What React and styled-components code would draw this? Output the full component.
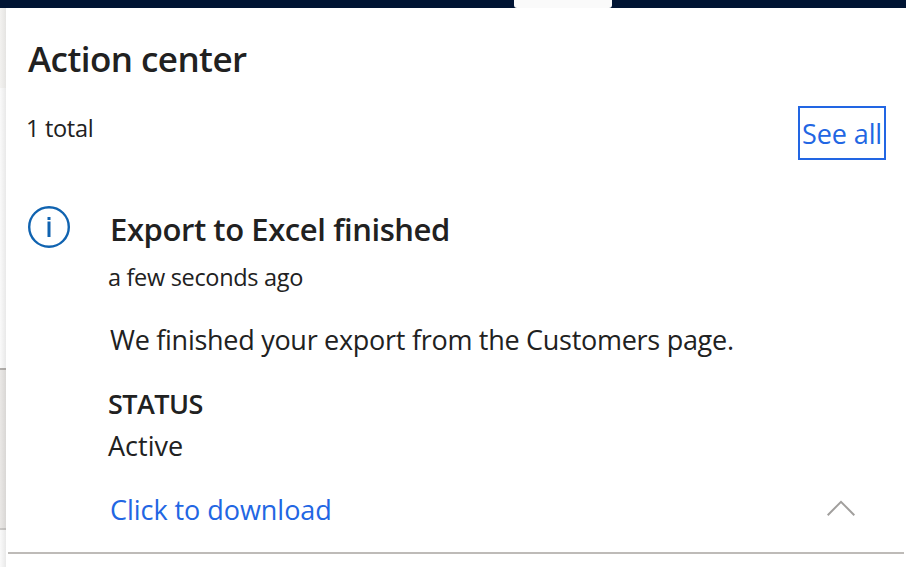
import React from "react";
import styled, { createGlobalStyle } from "styled-components";

const GlobalStyle = createGlobalStyle`
  * { box-sizing: border-box; }
  body {
    margin: 0;
    background: #fff;
    color: #212121;
    font-family: "Segoe UI", "Open Sans", "Noto Sans", sans-serif;
    overflow: hidden;
  }
`;

const Page = styled.div`
  width: 906px;
  height: 567px;
  display: flex;
  flex-direction: column;
`;

const TopBar = styled.header`
  height: 8px;
  flex: none;
  background: #001433;
  padding-left: 514px;
`;

const ActiveTab = styled.div`
  width: 98px;
  height: 8px;
  background: #fafafa;
  border-radius: 0 0 3px 3px;
`;

const Body = styled.div`
  flex: 1;
  display: flex;
  min-height: 0;
`;

const Backdrop = styled.div`
  width: 6px;
  flex: none;
  display: flex;
  flex-direction: column;
`;

const Band = styled.div`
  height: ${(p) => p.$height}px;
  background: linear-gradient(to right, ${(p) => p.$from}, ${(p) => p.$to});
`;

const Panel = styled.aside`
  flex: 1;
  background: #fff;
  display: flex;
  flex-direction: column;
  padding: 27px 2px 0;
`;

const Line = styled.div`
  font-size: ${(p) => p.$size}px;
  line-height: ${(p) => p.$line}px;
  font-weight: ${(p) => p.$weight || 400};
  letter-spacing: ${(p) => p.$spacing || 0}px;
  margin: ${(p) => p.$margin || 0};
  white-space: nowrap;
`;

const Summary = styled.div`
  display: flex;
  justify-content: space-between;
  align-items: flex-start;
  height: 54px;
  margin: 23px 18px 0 19px;
`;

const SeeAll = styled.button`
  width: 88px;
  height: 54px;
  padding: 2px 0 0 2px;
  border: 2px solid #2266e3;
  background: #fff;
  color: #2266e3;
  font: 400 27px/36px "Segoe UI", "Open Sans", "Noto Sans", sans-serif;
  letter-spacing: -0.1px;
  text-align: left;
  white-space: nowrap;
`;

const Notification = styled.article`
  display: flex;
  height: 348px;
  margin-top: 46px;
  padding-left: 20px;
  border-bottom: 2px solid #bebbb8;
`;

const InfoIcon = styled.svg`
  width: 42px;
  height: 42px;
  flex: none;
`;

const Details = styled.div`
  flex: 1;
  padding: 3px 49px 0 38px;
`;

const Footer = styled.div`
  display: flex;
  justify-content: space-between;
  margin: 28px 0 0 2px;
  color: #2266e3;
`;

const Chevron = styled.svg`
  width: 28px;
  height: 16px;
  margin-top: 8px;
`;

export default function App() {
  return (
    <>
      <GlobalStyle />
      <Page>
        <TopBar><ActiveTab /></TopBar>
        <Body>
          <Backdrop>
            <Band $height={80} $from="#f3f2f0" $to="#e5e4e2" />
            <Band $height={280} $from="#fafafa" $to="#e9e9e9" />
            <Band $height={2} $from="#b3b0ad" $to="#a8a5a2" />
            <Band $height={158} $from="#eae8e6" $to="#d9d7d5" />
            <Band $height={2} $from="#cccac8" $to="#bdbbb9" />
            <Band $height={37} $from="#fafafa" $to="#e9e9e9" />
          </Backdrop>
          <Panel>
            <Line as="h1" $size={35} $line={48} $weight={600} $spacing={-0.55} $margin="0 0 0 20px">Action center</Line>
            <Summary>
              <Line $size={23.5} $line={32} $spacing={-0.3} $margin="6px 0 0 -1px">1 total</Line>
              <SeeAll>See all</SeeAll>
            </Summary>
            <Notification>
              <InfoIcon viewBox="0 0 42 42" fill="none">
                <circle cx="21" cy="21" r="19.8" stroke="#1063b0" strokeWidth="2.4" />
                <path d="M21 15.5V31M21 11V14" stroke="#1063b0" strokeWidth="3" />
              </InfoIcon>
              <Details>
                <Line as="h2" $size={31} $line={40} $weight={600} $spacing={-0.42} $margin="0 0 0 2px">Export to Excel finished</Line>
                <Line $size={23.5} $line={32} $spacing={-0.32} $margin="12px 0 0">a few seconds ago</Line>
                <Line $size={27} $line={36} $spacing={-0.28} $margin="29px 0 0 2px">We finished your export from the Customers page.</Line>
                <Line $size={27} $line={36} $weight={600} $spacing={-0.55} $margin="28px 0 0">STATUS</Line>
                <Line $size={27} $line={36} $margin="6px 0 0">Active</Line>
                <Footer>
                  <Line $size={27} $line={36} $spacing={-0.04}>Click to download</Line>
                  <Chevron viewBox="0 0 28 16" fill="none">
                    <path d="M.7 15.2L14 1.8L27.3 15.2" stroke="#a19f9d" strokeWidth="2" />
                  </Chevron>
                </Footer>
              </Details>
            </Notification>
          </Panel>
        </Body>
      </Page>
    </>
  );
}
